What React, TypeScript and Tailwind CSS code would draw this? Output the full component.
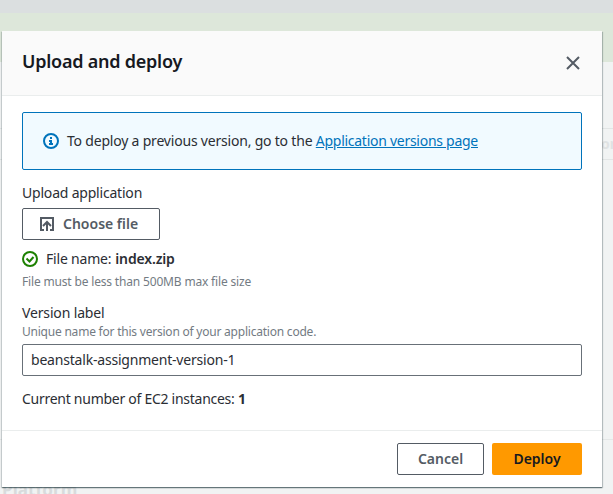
import React from "react";

function InfoIcon() {
  return (
    <svg width="16" height="16" viewBox="0 0 16 16" fill="none" stroke="#0073bb" strokeWidth="2" className="shrink-0">
      <circle cx="8" cy="8" r="7" />
      <path d="M6 11h4M8 11V8H6M7 5h2" />
    </svg>
  );
}

function SuccessIcon() {
  return (
    <svg width="16" height="16" viewBox="0 0 16 16" fill="none" stroke="#1d8102" strokeWidth="2" className="shrink-0">
      <circle cx="8" cy="8" r="7" />
      <path d="m4.5 7.5 3 3 4-4.5" />
    </svg>
  );
}

function UploadIcon() {
  return (
    <svg width="16" height="16" viewBox="0 0 16 16" fill="none" stroke="#545b64" strokeWidth="2" className="shrink-0">
      <path d="M5 14H2V2h12v12h-3" />
      <path d="M8 15V6M4 10l4-4 4 4" />
    </svg>
  );
}

function CloseIcon() {
  return (
    <svg width="16" height="16" viewBox="0 0 16 16" fill="none" stroke="#545b64" strokeWidth="2">
      <path d="m2 2 12 12M14 2 2 14" />
    </svg>
  );
}

function Backdrop() {
  return (
    <div className="absolute inset-0 flex flex-col">
      <div className="h-[13px] shrink-0 bg-[#dbdfe0]" />
      <div className="h-[49px] shrink-0 bg-[#dde7da]" />
      <div className="h-[67px] shrink-0 border-b border-[#e2e5e5]" />
      <div className="flex h-[31px] shrink-0 items-center justify-end border-b border-[#e2e5e5]">
        <span className="w-[12px] text-[14px] font-bold text-[#dfe2e3]">on</span>
      </div>
      <div className="h-[280px] shrink-0 border-b border-[#e4e7e7]" />
      <div className="pt-[39px] pl-[2px] text-[17px] leading-[22px] font-bold tracking-[0.1px] text-[#d8dbdc]">Platform</div>
    </div>
  );
}

export default function App() {
  return (
    <div className="relative h-[494px] w-[613px] overflow-hidden bg-[#f1f3f3] font-['Noto_Sans','Open_Sans',sans-serif] text-[14px] leading-[22px] text-[#2b2e34]">
      <Backdrop />
      <section className="absolute top-[31px] left-[2px] flex h-[456px] w-[600px] flex-col bg-white shadow-[0_1px_1px_0_rgba(0,28,36,0.4),1px_1px_1px_0_rgba(0,28,36,0.2),-1px_1px_1px_0_rgba(0,28,36,0.12)]">
        <header className="flex h-[65px] items-center justify-between border-b border-[#eaeded] bg-[#fafafa] pr-[21px] pl-5">
          <h2 className="pb-[5px] text-[18px] font-semibold tracking-[-0.24px] text-[#16191f]">Upload and deploy</h2>
          <button aria-label="Close">
            <CloseIcon />
          </button>
        </header>
        <main className="flex flex-1 flex-col items-start px-5 pt-4">
          <div className="flex h-[58px] w-full items-center rounded-[2px] border border-[#0073bb] bg-[#f1faff] px-5">
            <InfoIcon />
            <p className="ml-2">
              <span className="tracking-[-0.2px]">To deploy a previous version, go to the </span>
              <a className="tracking-[-0.27px] text-[#0073bb] underline">Application versions page</a>
            </p>
          </div>
          <label className="mt-3 tracking-[-0.2px]">Upload application</label>
          <button className="mt-1 flex h-8 w-[138px] items-center rounded-[2px] border border-[#545b64] pl-4 font-semibold text-[#545b64]">
            <UploadIcon />
            <span className="ml-2">Choose file</span>
          </button>
          <div className="mt-2 flex items-center">
            <SuccessIcon />
            <span className="ml-2 tracking-[-0.2px]">File name:</span>
            <b className="ml-1 font-semibold tracking-[-0.15px]">index.zip</b>
          </div>
          <p className="mt-px text-[12px] tracking-[-0.17px] text-[#737b83]">File must be less than 500MB max file size</p>
          <label className="mt-[9px] tracking-[-0.15px]">Version label</label>
          <p className="text-[12px] leading-4 tracking-[-0.22px] text-[#737b83]">
            Unique name for this version of your application code.
          </p>
          <input
            className="mt-1 h-8 w-full rounded-[2px] border border-[#687078] bg-white px-2 pb-px tracking-[-0.2px]"
            defaultValue="beanstalk-assignment-version-1"
          />
          <p className="mt-3 tracking-[-0.27px]">
            <span>Current number of EC2 instances: </span>
            <b>1</b>
          </p>
        </main>
        <footer className="flex h-[57px] items-start justify-end gap-2 border-t border-[#eaeded] px-5 pt-3 font-semibold">
          <button className="h-8 w-[87px] rounded-[2px] border border-[#545b64] text-[#545b64]">Cancel</button>
          <button className="h-8 w-[90px] rounded-[2px] bg-[#ff9900] text-[#16191f]">Deploy</button>
        </footer>
      </section>
    </div>
  );
}
